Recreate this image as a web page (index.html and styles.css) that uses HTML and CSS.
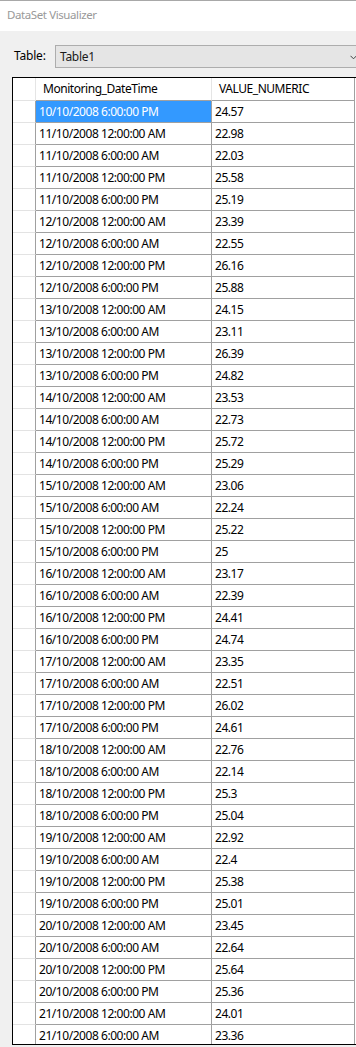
FILE: index.html
```html
<!DOCTYPE html>
<html>
<head>
<meta charset="utf-8">
<title>DataSet Visualizer</title>
<link rel="stylesheet" href="styles.css">
</head>
<body>
<div class="window">
  <div class="titlebar">DataSet Visualizer</div>
  <div class="toolbar">
    <span class="label">Table:</span>
    <div class="combo">
      <span class="combo-text">Table1</span>
      <svg class="chev" width="7" height="5" viewBox="0 0 7 5"><path d="M0.5 0.8 L3.5 3.8 L6.5 0.8" fill="none" stroke="#404040" stroke-width="1"/></svg>
    </div>
  </div>
  <div class="grid">
    <div class="row head">
      <div class="rh"></div>
      <div class="c1">Monitoring_DateTime</div>
      <div class="c2">VALUE_NUMERIC</div>
      <div class="fill"></div>
    </div>
    <div class="row sel"><div class="rh"></div><div class="c1">10/10/2008 6:00:00 PM</div><div class="c2">24.57</div><div class="fill"></div></div>
    <div class="row"><div class="rh"></div><div class="c1">11/10/2008 12:00:00 AM</div><div class="c2">22.98</div><div class="fill"></div></div>
    <div class="row"><div class="rh"></div><div class="c1">11/10/2008 6:00:00 AM</div><div class="c2">22.03</div><div class="fill"></div></div>
    <div class="row"><div class="rh"></div><div class="c1">11/10/2008 12:00:00 PM</div><div class="c2">25.58</div><div class="fill"></div></div>
    <div class="row"><div class="rh"></div><div class="c1">11/10/2008 6:00:00 PM</div><div class="c2">25.19</div><div class="fill"></div></div>
    <div class="row"><div class="rh"></div><div class="c1">12/10/2008 12:00:00 AM</div><div class="c2">23.39</div><div class="fill"></div></div>
    <div class="row"><div class="rh"></div><div class="c1">12/10/2008 6:00:00 AM</div><div class="c2">22.55</div><div class="fill"></div></div>
    <div class="row"><div class="rh"></div><div class="c1">12/10/2008 12:00:00 PM</div><div class="c2">26.16</div><div class="fill"></div></div>
    <div class="row"><div class="rh"></div><div class="c1">12/10/2008 6:00:00 PM</div><div class="c2">25.88</div><div class="fill"></div></div>
    <div class="row"><div class="rh"></div><div class="c1">13/10/2008 12:00:00 AM</div><div class="c2">24.15</div><div class="fill"></div></div>
    <div class="row"><div class="rh"></div><div class="c1">13/10/2008 6:00:00 AM</div><div class="c2">23.11</div><div class="fill"></div></div>
    <div class="row"><div class="rh"></div><div class="c1">13/10/2008 12:00:00 PM</div><div class="c2">26.39</div><div class="fill"></div></div>
    <div class="row"><div class="rh"></div><div class="c1">13/10/2008 6:00:00 PM</div><div class="c2">24.82</div><div class="fill"></div></div>
    <div class="row"><div class="rh"></div><div class="c1">14/10/2008 12:00:00 AM</div><div class="c2">23.53</div><div class="fill"></div></div>
    <div class="row"><div class="rh"></div><div class="c1">14/10/2008 6:00:00 AM</div><div class="c2">22.73</div><div class="fill"></div></div>
    <div class="row"><div class="rh"></div><div class="c1">14/10/2008 12:00:00 PM</div><div class="c2">25.72</div><div class="fill"></div></div>
    <div class="row"><div class="rh"></div><div class="c1">14/10/2008 6:00:00 PM</div><div class="c2">25.29</div><div class="fill"></div></div>
    <div class="row"><div class="rh"></div><div class="c1">15/10/2008 12:00:00 AM</div><div class="c2">23.06</div><div class="fill"></div></div>
    <div class="row"><div class="rh"></div><div class="c1">15/10/2008 6:00:00 AM</div><div class="c2">22.24</div><div class="fill"></div></div>
    <div class="row"><div class="rh"></div><div class="c1">15/10/2008 12:00:00 PM</div><div class="c2">25.22</div><div class="fill"></div></div>
    <div class="row"><div class="rh"></div><div class="c1">15/10/2008 6:00:00 PM</div><div class="c2">25</div><div class="fill"></div></div>
    <div class="row"><div class="rh"></div><div class="c1">16/10/2008 12:00:00 AM</div><div class="c2">23.17</div><div class="fill"></div></div>
    <div class="row"><div class="rh"></div><div class="c1">16/10/2008 6:00:00 AM</div><div class="c2">22.39</div><div class="fill"></div></div>
    <div class="row"><div class="rh"></div><div class="c1">16/10/2008 12:00:00 PM</div><div class="c2">24.41</div><div class="fill"></div></div>
    <div class="row"><div class="rh"></div><div class="c1">16/10/2008 6:00:00 PM</div><div class="c2">24.74</div><div class="fill"></div></div>
    <div class="row"><div class="rh"></div><div class="c1">17/10/2008 12:00:00 AM</div><div class="c2">23.35</div><div class="fill"></div></div>
    <div class="row"><div class="rh"></div><div class="c1">17/10/2008 6:00:00 AM</div><div class="c2">22.51</div><div class="fill"></div></div>
    <div class="row"><div class="rh"></div><div class="c1">17/10/2008 12:00:00 PM</div><div class="c2">26.02</div><div class="fill"></div></div>
    <div class="row"><div class="rh"></div><div class="c1">17/10/2008 6:00:00 PM</div><div class="c2">24.61</div><div class="fill"></div></div>
    <div class="row"><div class="rh"></div><div class="c1">18/10/2008 12:00:00 AM</div><div class="c2">22.76</div><div class="fill"></div></div>
    <div class="row"><div class="rh"></div><div class="c1">18/10/2008 6:00:00 AM</div><div class="c2">22.14</div><div class="fill"></div></div>
    <div class="row"><div class="rh"></div><div class="c1">18/10/2008 12:00:00 PM</div><div class="c2">25.3</div><div class="fill"></div></div>
    <div class="row"><div class="rh"></div><div class="c1">18/10/2008 6:00:00 PM</div><div class="c2">25.04</div><div class="fill"></div></div>
    <div class="row"><div class="rh"></div><div class="c1">19/10/2008 12:00:00 AM</div><div class="c2">22.92</div><div class="fill"></div></div>
    <div class="row"><div class="rh"></div><div class="c1">19/10/2008 6:00:00 AM</div><div class="c2">22.4</div><div class="fill"></div></div>
    <div class="row"><div class="rh"></div><div class="c1">19/10/2008 12:00:00 PM</div><div class="c2">25.38</div><div class="fill"></div></div>
    <div class="row"><div class="rh"></div><div class="c1">19/10/2008 6:00:00 PM</div><div class="c2">25.01</div><div class="fill"></div></div>
    <div class="row"><div class="rh"></div><div class="c1">20/10/2008 12:00:00 AM</div><div class="c2">23.45</div><div class="fill"></div></div>
    <div class="row"><div class="rh"></div><div class="c1">20/10/2008 6:00:00 AM</div><div class="c2">22.64</div><div class="fill"></div></div>
    <div class="row"><div class="rh"></div><div class="c1">20/10/2008 12:00:00 PM</div><div class="c2">25.64</div><div class="fill"></div></div>
    <div class="row"><div class="rh"></div><div class="c1">20/10/2008 6:00:00 PM</div><div class="c2">25.36</div><div class="fill"></div></div>
    <div class="row"><div class="rh"></div><div class="c1">21/10/2008 12:00:00 AM</div><div class="c2">24.01</div><div class="fill"></div></div>
    <div class="row"><div class="rh"></div><div class="c1">21/10/2008 6:00:00 AM</div><div class="c2">23.36</div><div class="fill"></div></div>
  </div>
</div>
</body>
</html>
```

FILE: styles.css
```css
* { box-sizing: border-box; }
html, body { margin: 0; padding: 0; }
body {
  width: 356px;
  height: 1047px;
  overflow: hidden;
  background: #f0f0f0;
  font-family: "Noto Sans", "Open Sans", sans-serif;
  font-size: 12px;
  color: #000;
}
.window {
  width: 356px;
  height: 1047px;
  overflow: hidden;
  display: flex;
  flex-direction: column;
}
.titlebar {
  height: 31px;
  background: #fff;
  border-top: 1px solid #a8a8a8;
  color: #999;
  padding-left: 7px;
  font-size: 11.5px;
  letter-spacing: -0.4px;
  line-height: 28px;
  flex: none;
}
.toolbar {
  display: flex;
  align-items: center;
  margin-top: 14px;
  padding-left: 14px;
  height: 23px;
  flex: none;
}
.label {
  width: 41px;
  flex: none;
  line-height: 20px;
  padding-bottom: 2px;
  letter-spacing: -0.2px;
}
.combo {
  width: 314px;
  height: 23px;
  flex: none;
  background: #e5e5e5;
  border: 1px solid #adadad;
  display: flex;
  align-items: center;
  justify-content: space-between;
  padding: 0 11px 0 4px;
}
.combo-text { color: #1a1a1a; line-height: 21px; letter-spacing: -0.3px; }
.chev { display: block; margin-top: 1px; }
.grid {
  margin-top: 9px;
  margin-left: 12px;
  width: 360px;
  height: 968px;
  flex: none;
  overflow: hidden;
  border-top: 1px solid #000;
  border-left: 1px solid #000;
  border-bottom: 1px solid #000;
  background: #fff;
  letter-spacing: -0.45px;
}
.row {
  display: flex;
  height: 22px;
  line-height: 21px;
  white-space: nowrap;
}
.row > div { height: 22px; flex: none; }
.rh {
  width: 23px;
  border-right: 1px solid #a0a0a0;
  border-bottom: 1px solid #e3e3e3;
}
.c1 {
  width: 176px;
  padding-left: 3px;
  border-right: 1px solid #a0a0a0;
  border-bottom: 1px solid #a0a0a0;
}
.c2 {
  width: 143px;
  padding-left: 3px;
  border-right: 1px solid #a0a0a0;
  border-bottom: 1px solid #a0a0a0;
}
.row > .fill { flex: 1; }
.head { height: 23px; line-height: 22px; }
.head > div { height: 23px; }
.head .rh { border-right-color: #e5e5e5; border-bottom-color: #e3e3e3; }
.head .c1 { padding-left: 7px; border-right-color: #e5e5e5; }
.head .c2 { padding-left: 7px; }
.sel .c1 { background: #3399ff; color: #fff; }
```
